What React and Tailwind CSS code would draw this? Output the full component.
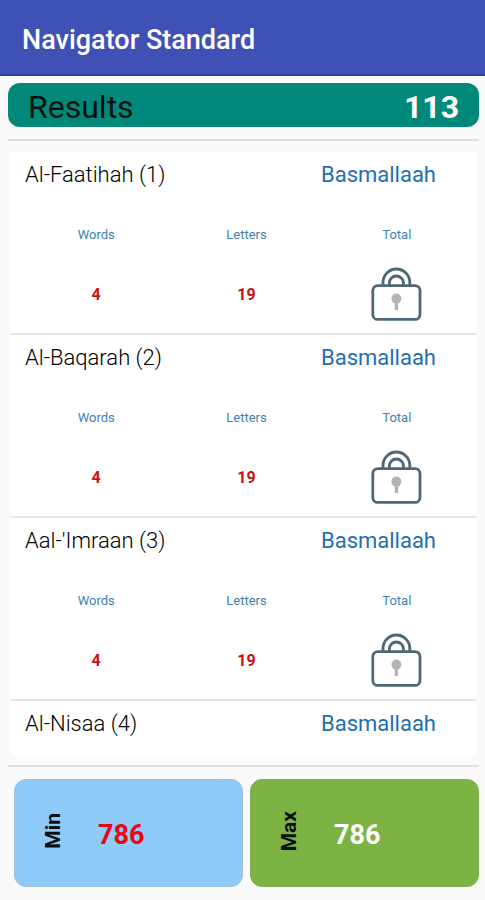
const chapters = [
  { name: "Al-Faatihah (1)", phrase: "Basmallaah", words: 4, letters: 19 },
  { name: "Al-Baqarah (2)", phrase: "Basmallaah", words: 4, letters: 19 },
  { name: "Aal-'Imraan (3)", phrase: "Basmallaah", words: 4, letters: 19 },
  { name: "Al-Nisaa (4)", phrase: "Basmallaah" },
];

function LockIcon() {
  return (
    <svg viewBox="0 0 52 56" className="h-14 w-[52px]" fill="none" role="img" aria-label="Locked">
      <g stroke="#4d6775" strokeWidth="2.8">
        <rect x="1.8" y="18.6" width="47.2" height="33.8" rx="5" />
        <path d="M12 18.6V15.4a13.4 13.4 0 0 1 26.8 0V18.6" />
        <path d="M18.4 18.6V16a7 7 0 0 1 14 0V18.6" />
      </g>
      <circle cx="25.4" cy="31.6" r="5" fill="#b0b5b7" />
      <path d="M25.4 33V43" stroke="#b0b5b7" strokeWidth="3.4" />
    </svg>
  );
}

function Stat({ label, children }) {
  return (
    <div className="flex flex-col items-center">
      <dt className="text-[13px] leading-5 text-[#3f82ab]">{label}</dt>
      <dd className="mt-5 flex h-[60px] items-center text-base font-bold text-[#cc1016]">{children}</dd>
    </div>
  );
}

function Chapter({ item }) {
  return (
    <li className="border-b-2 border-[#e4e4e4] last:border-b-0">
      <div className="flex items-center justify-between pt-[9px] pr-10 pl-[14px] text-[22px] leading-7">
        <h2 className="font-light text-black">{item.name}</h2>
        <span className="text-[#1f6fb2]">{item.phrase}</span>
      </div>
      {item.words && (
        <dl className="grid grid-cols-3 pt-9 pr-1 pb-2 pl-[10px]">
          <Stat label="Words">{item.words}</Stat>
          <Stat label="Letters">{item.letters}</Stat>
          <Stat label="Total">
            <LockIcon />
          </Stat>
        </dl>
      )}
    </li>
  );
}

function Extreme({ label, value, className }) {
  return (
    <div className={`flex h-[108px] items-center rounded-xl border pt-1 pl-7 ${className}`}>
      <span className="mb-2 w-5 rotate-180 text-[21px] leading-5 font-bold text-[#0b0f14] [writing-mode:vertical-rl]">
        {label}
      </span>
      <span className="ml-[35px] text-[27px] leading-8 font-bold">{value}</span>
    </div>
  );
}

export default function App() {
  return (
    <div className="flex h-screen flex-col bg-[#fafafa] font-[Roboto,sans-serif]">
      <header className="flex h-[76px] shrink-0 items-center border-b-2 border-[#2f3fa6] bg-[#3f51b5] px-[22px] pt-[6px]">
        <h1 className="text-[27px] leading-8 font-medium text-white">Navigator Standard</h1>
      </header>

      <main className="flex min-h-0 flex-1 flex-col pt-[7px] pr-[6px] pb-[13px] pl-2">
        <section className="flex h-11 shrink-0 items-center justify-between rounded-xl bg-[#00897b] px-5 pt-1 text-[32px] leading-10">
          <h2 className="text-[#06110f]">Results</h2>
          <span className="font-bold text-white">113</span>
        </section>

        <div className="mt-3 min-h-0 flex-1 border-y-2 border-[#e0e0e0] px-[3px] pt-[11px] pb-[9px]">
          <ul className="h-full overflow-y-auto bg-white [scrollbar-width:none]">
            {chapters.map((item) => (
              <Chapter key={item.name} item={item} />
            ))}
          </ul>
        </div>

        <section className="mt-3 grid shrink-0 grid-cols-2 gap-[7px] pl-[6px]">
          <Extreme label="Min" value="786" className="border-[#9fbfd6] bg-[#90caf9] text-[#ea0610]" />
          <Extreme label="Max" value="786" className="border-[#84ae55] bg-[#7cb342] text-white" />
        </section>
      </main>
    </div>
  );
}
